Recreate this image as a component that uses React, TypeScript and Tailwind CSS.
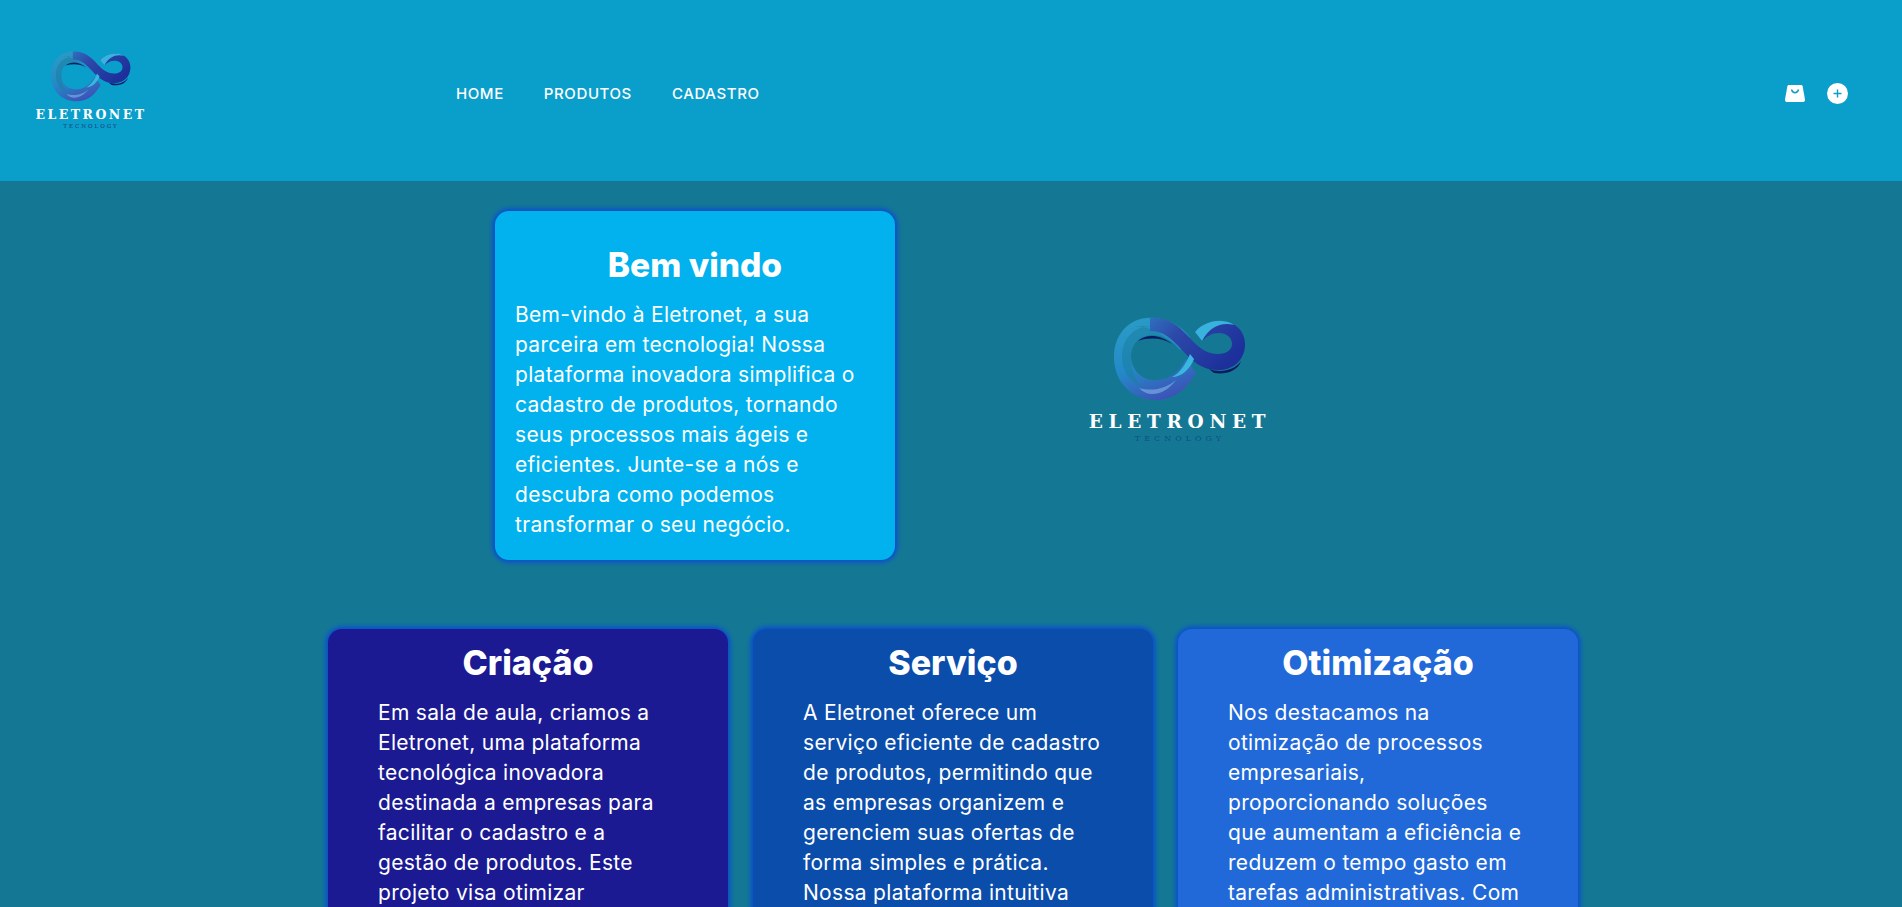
import React from 'react';

const sans = "font-['Inter','Open_Sans',sans-serif]";

const cards = [
  {
    title: 'Criação',
    bg: 'bg-[#1b1a92]',
    lines: [
      'Em sala de aula, criamos a',
      'Eletronet, uma plataforma',
      'tecnológica inovadora',
      'destinada a empresas para',
      'facilitar o cadastro e a',
      'gestão de produtos. Este',
      'projeto visa otimizar',
    ],
  },
  {
    title: 'Serviço',
    bg: 'bg-[#0b4dab]',
    lines: [
      'A Eletronet oferece um',
      'serviço eficiente de cadastro',
      'de produtos, permitindo que',
      'as empresas organizem e',
      'gerenciem suas ofertas de',
      'forma simples e prática.',
      'Nossa plataforma intuitiva',
    ],
  },
  {
    title: 'Otimização',
    bg: 'bg-[#2169d9]',
    lines: [
      'Nos destacamos na',
      'otimização de processos',
      'empresariais,',
      'proporcionando soluções',
      'que aumentam a eficiência e',
      'reduzem o tempo gasto em',
      'tarefas administrativas. Com',
    ],
  },
];

const welcome = [
  'Bem-vindo à Eletronet, a sua',
  'parceira em tecnologia! Nossa',
  'plataforma inovadora simplifica o',
  'cadastro de produtos, tornando',
  'seus processos mais ágeis e',
  'eficientes. Junte-se a nós e',
  'descubra como podemos',
  'transformar o seu negócio.',
];

// infinity ribbon, coordinates traced from the logo at 132x84
const InfinityMark = ({ id, className }: { id: string; className: string }) => (
  <svg viewBox="0 0 132 84" className={className}>
    <defs>
      <linearGradient id={`${id}-a`} x1="0.2" y1="0" x2="0.6" y2="1">
        <stop offset="0" stopColor="#2a9cc6" />
        <stop offset="0.55" stopColor="#2488c8" />
        <stop offset="1" stopColor="#3d52b6" />
      </linearGradient>
      <linearGradient id={`${id}-b`} x1="0" y1="0" x2="1" y2="0.6">
        <stop offset="0" stopColor="#2f6fbe" />
        <stop offset="0.35" stopColor="#2d48a8" />
        <stop offset="1" stopColor="#1c2f9a" />
      </linearGradient>
    </defs>
    <path
      d="M40 1C16-1 0 17 0 40c0 26 19 44 44 43 18-1 30-13 38-27L72 42c-6 12-16 21-30 21C27 64 17 52 17 39c0-12 9-21 21-21 12 0 20 6 28 15l10-13C66 8 54 2 40 1z"
      fill={`url(#${id}-a)`}
    />
    <path d="M38 9C20 9 8 22 8 39c0 14 7 26 20 31-7-7-11-19-11-31 0-12 9-21 21-21 6 0 11 1 16 5-8-9-22-14-36-14z" fill="#1a7f9f" opacity="0.55" />
    <path
      d="M36 1c16-2 28 7 38 18 10 11 18 18 30 18 8 0 14-4 14-10 0-7-6-11-13-11-7 0-12 3-17 8l-7-9c7-8 17-12 27-11 14 1 24 11 23 25-1 15-13 25-28 24-15 0-25-9-35-20C58 22 50 14 36 14z"
      fill={`url(#${id}-b)`}
    />
    <path d="M81 15c7-8 17-12 27-11 4 0 8 1 12 4-12-3-24 1-32 16z" fill="#38b3dd" />
    <path d="M58 60c8-4 14-13 18-23l4 5c-4 10-12 18-22 18z" fill="#3ab7e0" />
    <path d="M24 24c8-7 22-7 34 3-10-6-22-7-34-3zM95 52c11 4 25 2 32-8-3 10-15 14-27 12z" fill="#0c1c63" />
    <path d="M25 71c14 4 28 0 37-8-6 8-14 14-24 14-5 0-9-2-13-6z" fill="#7ba6e2" opacity="0.7" />
  </svg>
);

const Logo = ({ small }: { small?: boolean }) => (
  <div className="flex flex-col items-center">
    {small ? (
      <InfinityMark id="top" className="w-[80px] h-[51px]" />
    ) : (
      <InfinityMark id="hero" className="w-[132px] h-[84px]" />
    )}
    <span
      className={
        small
          ? "mt-[6px] font-['DejaVu_Serif',serif] font-bold text-white text-[12.5px] leading-[13px] tracking-[2.5px] whitespace-nowrap"
          : "mt-[12px] font-['DejaVu_Serif',serif] font-bold text-white text-[18.5px] leading-[18px] tracking-[5.7px] whitespace-nowrap"
      }
    >
      ELETRONET
    </span>
    <span
      className={
        small
          ? "mt-[2px] font-['DejaVu_Serif',serif] text-[#123a78] text-[5.5px] leading-[7px] tracking-[2px] whitespace-nowrap"
          : "mt-[3px] font-['DejaVu_Serif',serif] text-[#0e4f86] text-[8px] leading-[10px] tracking-[4px] whitespace-nowrap"
      }
    >
      TECNOLOGY
    </span>
  </div>
);

const Header = () => (
  <header className="h-[181px] bg-[#0a9ecb] flex items-center pl-[37px] pr-[54px]">
    <div className="w-[419px]">
      <div className="w-[108px]">
        <Logo small />
      </div>
    </div>
    <nav className="flex gap-[40px] mt-[8px]">
      {['HOME', 'PRODUTOS', 'CADASTRO'].map((item) => (
        <a key={item} className={`${sans} text-white text-[15px] font-medium tracking-[0.6px]`}>
          {item}
        </a>
      ))}
    </nav>
    <div className="ml-auto flex items-center gap-[22px] mt-[6px]">
      <svg viewBox="0 0 20 17" className="w-[20px] h-[17px]">
        <path
          d="M4 0h12c.8 0 1.400.4 1.600 1.200L20 14.500c.2 1.400-.8 2.500-2 2.500H2c-1.200 0-2.200-1.100-2-2.500L2.400 1.200C2.600.4 3.200 0 4 0z"
          fill="#fff"
        />
        <path d="M6.500 4.500c.6 2.200 2 3.200 3.500 3.200s2.900-1 3.500-3.200" fill="none" stroke="#0a9ecb" strokeWidth="1.400" />
      </svg>
      <svg viewBox="0 0 21 21" className="w-[21px] h-[21px]">
        <circle cx="10.500" cy="10.500" r="10.500" fill="#fff" />
        <path d="M10.500 6.500v8M6.500 10.500h8" stroke="#0a9ecb" strokeWidth="1.400" />
      </svg>
    </div>
  </header>
);

const Card = ({ title, bg, lines }: { title: string; bg: string; lines: string[] }) => (
  <div className={`${bg} w-[400px] h-[400px] shrink-0 rounded-[14px] shadow-[0_0_5px_2px_#0a48d8] pt-[14px] pl-[50px]`}>
    <h2 className={`${sans} -ml-[50px] text-center text-white text-[34px] leading-[40px] font-extrabold`}>{title}</h2>
    <div className="mt-[15px]">
      {lines.map((line) => (
        <p key={line} className={`${sans} text-white text-[21px] leading-[30px] tracking-[0.3px] whitespace-nowrap`}>
          {line}
        </p>
      ))}
    </div>
  </div>
);

export default function App() {
  return (
    <div className="h-screen overflow-hidden bg-[#147895]">
      <Header />
      <main className="pl-[328px]">
        <section className="flex items-center mt-[30px] pl-[167px]">
          <div className="w-[400px] h-[349px] bg-[#02b2ee] rounded-[14px] shadow-[0_0_5px_2px_#0a48d8] pt-[34px] px-[20px]">
            <h1 className={`${sans} text-center text-white text-[33.5px] leading-[40px] font-extrabold`}>Bem vindo</h1>
            <div className="mt-[15px]">
              {welcome.map((line) => (
                <p key={line} className={`${sans} text-white text-[21px] leading-[30px] tracking-[0.3px] whitespace-nowrap`}>
                  {line}
                </p>
              ))}
            </div>
          </div>
          <div className="w-[180px] ml-[195px] -mt-[11px]">
            <Logo />
          </div>
        </section>
        <section className="flex gap-[25px] mt-[69px]">
          {cards.map((card) => (
            <Card key={card.title} {...card} />
          ))}
        </section>
      </main>
    </div>
  );
}
